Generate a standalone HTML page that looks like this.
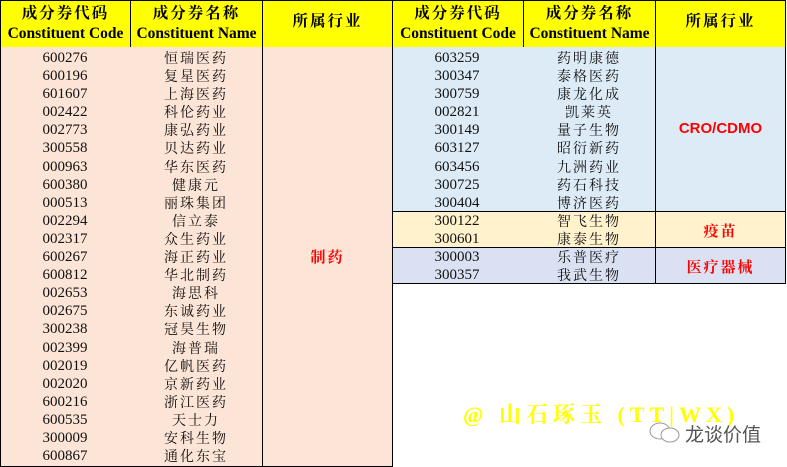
<!DOCTYPE html>
<html><head><meta charset="utf-8"><style>
*{margin:0;padding:0;box-sizing:border-box}
body{width:787px;height:465px;background:#fff;position:relative;overflow:hidden;font-family:"Liberation Serif","Noto Serif CJK SC",serif}
.b{position:absolute;border:1px solid #000}
.h{background:#ff0;font-weight:bold;text-align:center;font-size:15.5px;line-height:20px;padding-top:3px}
.h .z{letter-spacing:2px}
.c{position:absolute;text-align:center;font-size:15px;line-height:18.1px;color:#111}
.r{position:absolute;color:#f00;font-weight:bold;font-size:15px;text-align:center;letter-spacing:2px}
.n{font-family:'Noto Serif CJK SC',serif;font-size:14px;letter-spacing:2px}
</style></head><body>
<div class="b h" style="left:0;top:0;width:131px;height:48px"><span class="z">成分券代码</span><br>Constituent Code</div>
<div class="b h" style="left:130px;top:0;width:133px;height:48px"><span class="z">成分券名称</span><br>Constituent Name</div>
<div class="b h" style="left:262px;top:0;width:131px;height:48px;line-height:42px;padding:0"><span class="z">所属行业</span></div>
<div class="b h" style="left:392px;top:0;width:132px;height:48px"><span class="z">成分券代码</span><br>Constituent Code</div>
<div class="b h" style="left:523px;top:0;width:133px;height:48px"><span class="z">成分券名称</span><br>Constituent Name</div>
<div class="b h" style="left:655px;top:0;width:131px;height:48px;line-height:42px;padding:0"><span class="z">所属行业</span></div>

<div class="b" style="left:0;top:47px;width:263px;height:420px;background:#fce4d6;border-top:none"></div>
<div class="b" style="left:262px;top:47px;width:131px;height:420px;background:#fce4d6;border-top:none"></div>
<div class="r" style="left:262px;top:246px;width:131px">制药</div>

<div class="b" style="left:392px;top:47px;width:264px;height:165px;background:#ddebf7;border-top:none"></div>
<div class="b" style="left:655px;top:47px;width:131px;height:165px;background:#ddebf7;border-top:none"></div>
<div class="r" style="left:655px;top:120px;width:131px;font-family:'Liberation Sans',sans-serif;letter-spacing:0">CRO/CDMO</div>
<div class="b" style="left:392px;top:211px;width:264px;height:37px;background:#fff2cc"></div>
<div class="b" style="left:655px;top:211px;width:131px;height:37px;background:#fff2cc"></div>
<div class="r" style="left:655px;top:220px;width:131px">疫苗</div>
<div class="b" style="left:392px;top:247px;width:264px;height:37px;background:#d9e1f2"></div>
<div class="b" style="left:655px;top:247px;width:131px;height:37px;background:#d9e1f2"></div>
<div class="r" style="left:655px;top:256px;width:131px">医疗器械</div>

<div class="c" style="left:0;top:49px;width:130px">600276<br>600196<br>601607<br>002422<br>002773<br>300558<br>000963<br>600380<br>000513<br>002294<br>002317<br>600267<br>600812<br>002653<br>002675<br>300238<br>002399<br>002019<br>002020<br>600216<br>600535<br>300009<br>600867</div>
<div class="c n" style="left:130px;top:49px;width:132px">恒瑞医药<br>复星医药<br>上海医药<br>科伦药业<br>康弘药业<br>贝达药业<br>华东医药<br>健康元<br>丽珠集团<br>信立泰<br>众生药业<br>海正药业<br>华北制药<br>海思科<br>东诚药业<br>冠昊生物<br>海普瑞<br>亿帆医药<br>京新药业<br>浙江医药<br>天士力<br>安科生物<br>通化东宝</div>
<div class="c" style="left:392px;top:49px;width:130px">603259<br>300347<br>300759<br>002821<br>300149<br>603127<br>603456<br>300725<br>300404<br>300122<br>300601<br>300003<br>300357</div>
<div class="c n" style="left:523px;top:49px;width:132px">药明康德<br>泰格医药<br>康龙化成<br>凯莱英<br>量子生物<br>昭衍新药<br>九洲药业<br>药石科技<br>博济医药<br>智飞生物<br>康泰生物<br>乐普医疗<br>我武生物</div>

<div style="position:absolute;left:463px;top:398px;color:#ff0;font-size:22px;font-weight:bold;font-family:'Liberation Serif','Noto Serif CJK SC',serif;letter-spacing:5px;white-space:nowrap">@ 山石琢玉 (TT|WX)</div>
<svg style="position:absolute;left:648px;top:420px" width="34" height="26" viewBox="0 0 34 26"><ellipse cx="12" cy="11" rx="10" ry="8" fill="#fff" stroke="#999"/><ellipse cx="22" cy="15" rx="9" ry="7" fill="#fff" stroke="#999"/></svg>
<div style="position:absolute;left:685px;top:420px;font-size:19px;color:#555;font-family:'Noto Sans CJK SC',sans-serif">龙谈价值</div>
</body></html>
